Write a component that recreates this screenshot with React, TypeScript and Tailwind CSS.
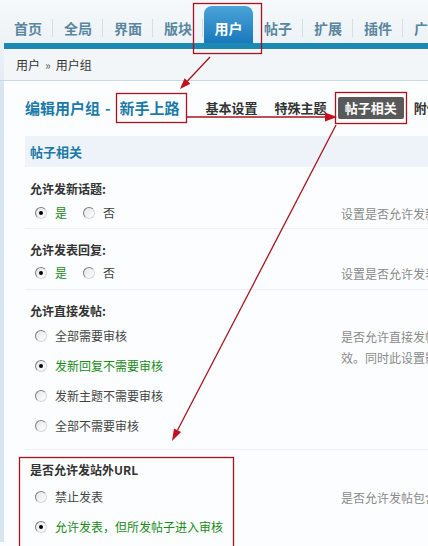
import React from "react";

const FONT = { fontFamily: '"Noto Sans CJK SC", "Noto Sans", sans-serif' };

const navTabs = ["首页", "全局", "界面", "版块", "用户", "帖子", "扩展", "插件", "广告"];

function Radio({ checked }: { checked?: boolean }) {
  return (
    <span className="relative inline-flex h-[12px] w-[12px] shrink-0 items-center justify-center rounded-full border border-[#7f7f7f] border-r-[#d6d6d6] border-b-[#d6d6d6] bg-gradient-to-br from-[#e6e6e6] to-white">
      {checked && <span className="h-[4px] w-[4px] rounded-full bg-black" />}
    </span>
  );
}

function Option({ label, checked }: { label: string; checked?: boolean }) {
  return (
    <div className="flex h-[30px] items-center">
      <Radio checked={checked} />
      <span className={"ml-[8px] whitespace-nowrap text-[12px] " + (checked ? "text-[#1a8a1a]" : "text-[#444]")}>
        {label}
      </span>
    </div>
  );
}

function Desc({ children }: { children: React.ReactNode }) {
  return (
    <div className="whitespace-nowrap pt-[5px] text-[12px] leading-[21px] text-[#8a8a8a]">{children}</div>
  );
}

export default function App() {
  return (
    <div className="relative h-[546px] w-[428px] overflow-hidden bg-[#fbfdfe]" style={FONT}>
      {/* top nav */}
      <div className="bg-gradient-to-b from-[#f6f9fb] to-[#e3ecf2]">
        <div className="flex h-[43px] items-end pl-[3px]">
          {navTabs.map((t) =>
            t === "用户" ? (
              <div key={t} className="flex h-[37px] w-[50px] shrink-0 justify-center pl-[1px]">
                <div className="h-full w-[50px] rounded-t-[8px] bg-gradient-to-b from-[#4aa3d8] to-[#1679bb] pt-[14px] text-center text-[14px] font-bold leading-[16px] text-white">
                  {t}
                </div>
              </div>
            ) : (
              <div key={t} className="relative h-[37px] w-[50px] shrink-0 pt-[14px] text-center text-[14px] font-bold leading-[16px] text-[#5a86a0]">
                <span className="whitespace-nowrap">{t}</span>
                <span className="absolute right-0 top-[13px] h-[18px] w-px bg-[#d3dee7]" />
              </div>
            )
          )}
        </div>
        <div className="ml-[4px] h-[6px] bg-[#1b89b4]" />
        <div className="ml-[4px] flex h-[31px] items-center border-t border-white bg-[#f2f6f9] pl-[12px] text-[12px] text-[#333]">
          用户 <span className="mx-[5px] text-[#666]">»</span> 用户组
        </div>
      </div>
      <div className="h-px bg-[#c8d8e4]" />

      <div className="flex">
        <div className="w-[4px] shrink-0 bg-[#d8e6f1]" />
        <div className="flex-1 pl-[21px]">
          {/* title row */}
          <div className="mt-[16px] mb-[17px] flex h-[22px] items-center whitespace-nowrap">
            <span className="text-[15px] font-bold text-[#1b7aa8]">编辑用户组</span>
            <span className="ml-[5px] mr-[9px] text-[15px] font-bold text-[#1b7aa8]">-</span>
            <span className="text-[15px] font-bold text-[#1b7aa8]">新手上路</span>
            <span className="ml-[26px] text-[13px] font-bold text-[#333]">基本设置</span>
            <span className="ml-[17px] text-[13px] font-bold text-[#333]">特殊主题</span>
            <span className="ml-[11px] rounded-[2px] bg-[#595959] px-[7px] py-[1px] text-[13px] font-bold text-white">帖子相关</span>
            <span className="ml-[10px] text-[13px] font-bold text-[#333]">附件</span>
          </div>

          {/* section header */}
          <div className="flex h-[31px] items-center bg-[#edf3f8] pl-[5px] text-[13px] font-bold text-[#1b7aa8]">帖子相关</div>

          {/* block 1 */}
          <div className="border-b border-[#edf0f3]">
            <div className="pl-[5px] pt-[14px] text-[12px] font-bold leading-[16px] text-[#333]">允许发新话题:</div>
            <div className="flex pt-[1px]">
              <div className="flex w-[316px] shrink-0 pl-[10px]">
                <Option label="是" checked />
                <div className="ml-[16px]">
                  <Option label="否" />
                </div>
              </div>
              <Desc>设置是否允许发新话题</Desc>
            </div>
          </div>

          {/* block 2 */}
          <div className="border-b border-[#edf0f3] pb-[1px]">
            <div className="pl-[5px] pt-[13px] text-[12px] font-bold leading-[16px] text-[#333]">允许发表回复:</div>
            <div className="flex">
              <div className="flex w-[316px] shrink-0 pl-[10px]">
                <Option label="是" checked />
                <div className="ml-[16px]">
                  <Option label="否" />
                </div>
              </div>
              <Desc>设置是否允许发表回复</Desc>
            </div>
          </div>

          {/* block 3 */}
          <div className="border-b border-[#edf0f3] pb-[8px]">
            <div className="pl-[5px] pt-[13px] text-[12px] font-bold leading-[16px] text-[#333]">允许直接发帖:</div>
            <div className="flex pt-[2px]">
              <div className="w-[316px] shrink-0 pl-[10px]">
                <Option label="全部需要审核" />
                <Option label="发新回复不需要审核" checked />
                <Option label="发新主题不需要审核" />
                <Option label="全部不需要审核" />
              </div>
              <Desc>
                是否允许直接发帖，否则需要审核后才能生
                <br />
                效。同时此设置影响版块的审核设置
              </Desc>
            </div>
          </div>

          {/* block 4 */}
          <div>
            <div className="pl-[5px] pt-[12px] text-[12px] font-bold leading-[16px] text-[#333]">是否允许发站外URL</div>
            <div className="flex pt-[4px]">
              <div className="w-[316px] shrink-0 pl-[10px]">
                <Option label="禁止发表" />
                <Option label="允许发表，但所发帖子进入审核" checked />
              </div>
              <Desc>是否允许发帖包含站外URL</Desc>
            </div>
          </div>
        </div>
      </div>

      {/* annotation overlay */}
      <svg className="pointer-events-none absolute left-0 top-0" width="428" height="546" viewBox="0 0 428 546">
        <g fill="none" stroke="#a8131d" strokeWidth="1.3">
          <rect x="193.5" y="3.5" width="68" height="50" />
          <rect x="116.5" y="93.5" width="70" height="29" />
          <rect x="335.5" y="92.5" width="71" height="31" />
          <rect x="19.5" y="457.5" width="214" height="100" />
          <line x1="210" y1="57" x2="187.5" y2="81" />
          <line x1="186" y1="117" x2="326" y2="117" />
          <line x1="336" y1="125" x2="177.5" y2="430.3" />
        </g>
        <g fill="#c4101c">
          <polygon points="180,89 190.4,83.7 184.6,78.3" />
          <polygon points="337,117 325,112.5 325,121.5" />
          <polygon points="172,441 181.1,432.1 174,428.5" />
        </g>
      </svg>
    </div>
  );
}
